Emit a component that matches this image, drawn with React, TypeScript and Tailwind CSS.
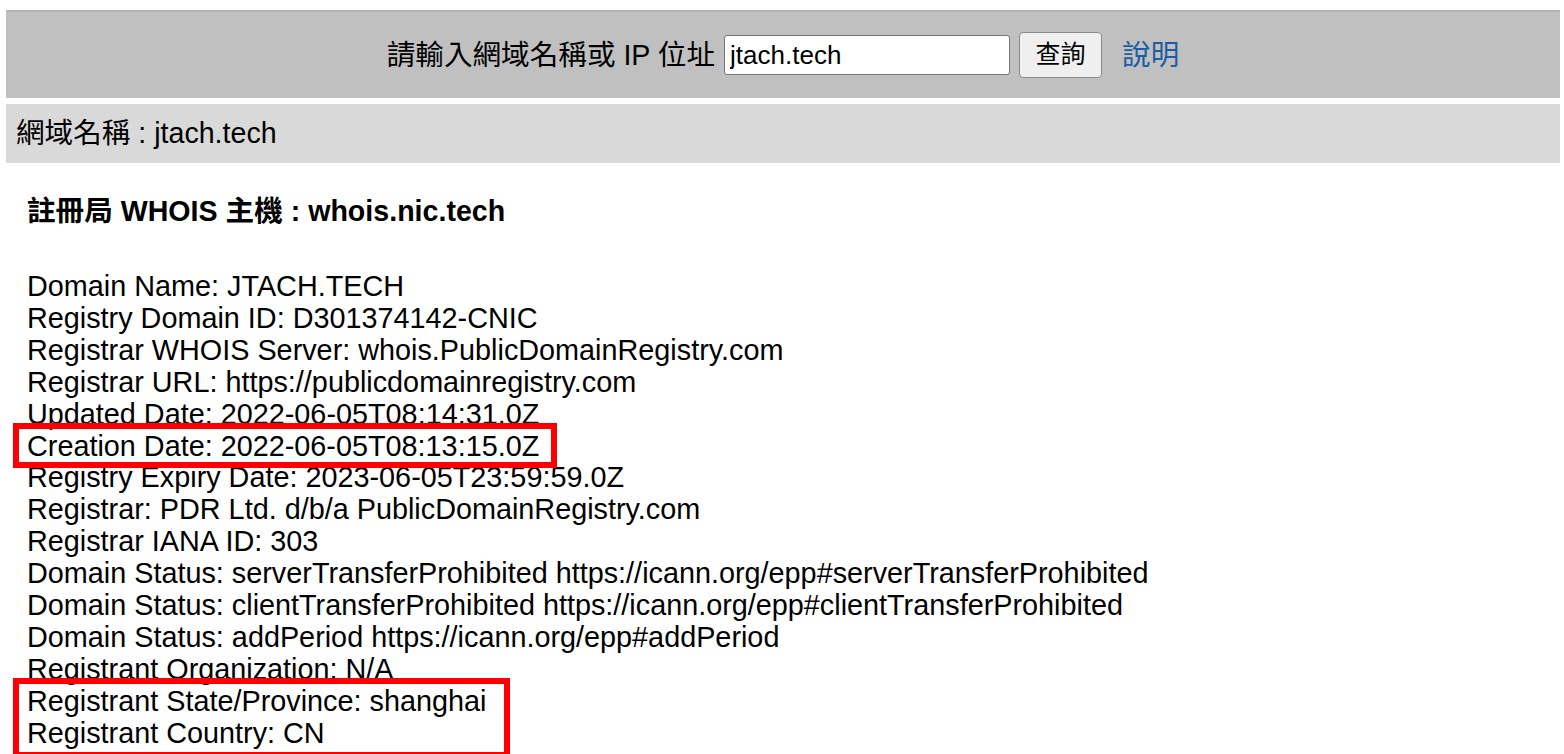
const font = { fontFamily: '"Liberation Sans", "Noto Sans CJK TC", Arial, sans-serif' };

const before = [
  'Domain Name: JTACH.TECH',
  'Registry Domain ID: D301374142-CNIC',
  'Registrar WHOIS Server: whois.PublicDomainRegistry.com',
  'Registrar URL: https://publicdomainregistry.com',
  'Updated Date: 2022-06-05T08:14:31.0Z',
];

const middle = [
  'Registry Expiry Date: 2023-06-05T23:59:59.0Z',
  'Registrar: PDR Ltd. d/b/a PublicDomainRegistry.com',
  'Registrar IANA ID: 303',
  'Domain Status: serverTransferProhibited https://icann.org/epp#serverTransferProhibited',
  'Domain Status: clientTransferProhibited https://icann.org/epp#clientTransferProhibited',
  'Domain Status: addPeriod https://icann.org/epp#addPeriod',
  'Registrant Organization: N/A',
];

const App = () => {
  return (
    <div className="min-h-screen bg-white text-black pl-[6px] pr-[4px] pt-[10px]" style={font}>
      {/* search bar */}
      <div className="h-[88px] bg-[#c0c0c0] border-t-2 border-[#b4b4b4] flex items-center justify-center text-[28.6px]">
        <span className="mr-[9px]">請輸入網域名稱或 IP 位址</span>
        <input
          defaultValue="jtach.tech"
          className="w-[286px] h-[40px] bg-white border border-[#767676] rounded-[3px] px-[5px] text-[26px] outline-none"
          style={font}
        />
        <button className="ml-[9px] w-[83px] h-[46px] bg-[#efefef] border border-[#8a8a8a] rounded-[4px] text-[25px]">
          查詢
        </button>
        <a href="#" className="ml-[20px] text-[#1f5ca3]">說明</a>
      </div>

      <div className="mt-[6px] h-[59px] bg-[#d9d9d9] flex items-center pl-[10px] text-[28.6px]">
        網域名稱 : jtach.tech
      </div>

      <main className="pl-[21px] pt-[32px]">
        <h2 className="text-[28.6px] font-bold leading-[32px]">註冊局 WHOIS 主機 : whois.nic.tech</h2>

        <div className="mt-[44px] text-[28.8px] leading-[31.9px]">
          {before.map((l) => (
            <div key={l}>{l}</div>
          ))}
          <div className="relative w-fit">
            Creation Date: 2022-06-05T08:13:15.0Z
            <span className="absolute -left-[14px] -right-[18px] -top-[8px] -bottom-[6px] border-[6px] border-[#ff0000]" />
          </div>
          {middle.map((l, i) => (
            <div key={i}>{l}</div>
          ))}
          <div className="relative w-fit">
            <div>Registrant State/Province: shanghai</div>
            <div>Registrant Country: CN</div>
            <span className="absolute -left-[14px] -right-[24px] -top-[8px] -bottom-[8px] border-[6px] border-[#ff0000]" />
          </div>
        </div>
      </main>
    </div>
  );
};

export default App;
